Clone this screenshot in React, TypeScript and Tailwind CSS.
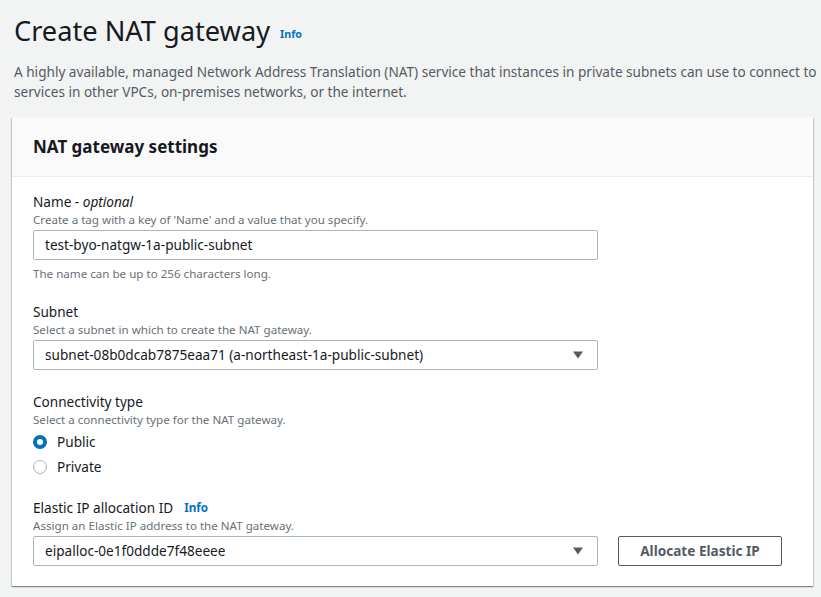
const font = { fontFamily: '"Noto Sans", "Open Sans", Arial, sans-serif' };

const Caret = () => (
  <svg width="12" height="10" viewBox="0 0 12 10" className="shrink-0">
    <path d="M1 1.5h10L6 8.5z" fill="#545b64" />
  </svg>
);

const Field = ({
  label,
  desc,
  info,
  className = "",
  children,
}: {
  label: React.ReactNode;
  desc: string;
  info?: boolean;
  className?: string;
  children: React.ReactNode;
}) => (
  <div className={`flex flex-col ${className}`}>
    <div className="flex items-center gap-[11px] text-[13.6px] leading-[20px] text-[#16191f]">
      <span>{label}</span>
      {info && <span className="text-[11.6px] font-bold text-[#0073bb]">Info</span>}
    </div>
    <div className="text-[11.6px] leading-[16px] text-[#687078]">{desc}</div>
    <div className="mt-[2px]">{children}</div>
  </div>
);

const SelectBox = ({ value }: { value: string }) => (
  <div className="flex h-[30px] w-[565px] items-center justify-between rounded-[2px] border border-[#aab7b8] bg-white pl-[11px] pr-[13px] text-[13.6px] text-[#16191f]">
    <span>{value}</span>
    <Caret />
  </div>
);

export default function App() {
  return (
    <div className="min-h-screen bg-[#f2f3f3] px-[12px] pt-[12px]" style={font}>
      <div className="flex items-center gap-[10px] pl-[2px]">
        <h1 className="text-[27.2px] leading-[38px] text-[#16191f]">Create NAT gateway</h1>
        <span className="mt-[6px] text-[10.7px] font-bold text-[#0073bb]">Info</span>
      </div>
      <p className="mt-[12px] w-[805px] pl-[2px] text-[13.6px] leading-[20px] text-[#545b64]">
        A highly available, managed Network Address Translation (NAT) service that instances in private subnets can use to connect to
        services in other VPCs, on-premises networks, or the internet.
      </p>

      <div className="mt-[15px] w-[801px] bg-white shadow-[0_1px_1px_0_rgba(0,28,36,0.3),1px_1px_1px_0_rgba(0,28,36,0.15),-1px_1px_1px_0_rgba(0,28,36,0.15)]">
        <div className="flex h-[60px] items-center border-b border-[#eaeded] bg-[#fafafa] px-[21px]">
          <h2 className="text-[17px] font-bold text-[#16191f]">NAT gateway settings</h2>
        </div>
        <div className="flex flex-col gap-[20px] px-[21px] pb-[20px] pt-[15px]">
          <div className="flex flex-col">
            <Field
              label={
                <>
                  Name - <i>optional</i>
                </>
              }
              desc="Create a tag with a key of 'Name' and a value that you specify."
            >
              <div className="flex h-[30px] w-[565px] items-center rounded-[2px] border border-[#aab7b8] bg-white px-[11px] text-[13.6px] text-[#16191f]">
                test-byo-natgw-1a-public-subnet
              </div>
            </Field>
            <div className="mt-[6px] text-[11.6px] leading-[16px] text-[#687078]">The name can be up to 256 characters long.</div>
          </div>

          <Field label="Subnet" desc="Select a subnet in which to create the NAT gateway.">
            <SelectBox value="subnet-08b0dcab7875eaa71 (a-northeast-1a-public-subnet)" />
          </Field>

          <div className="mt-[2px] flex flex-col">
            <div className="text-[13.6px] leading-[20px] text-[#16191f]">Connectivity type</div>
            <div className="text-[11.6px] leading-[16px] text-[#687078]">Select a connectivity type for the NAT gateway.</div>
            <div className="mt-[4px] flex flex-col gap-[5px]">
              <div className="flex h-[20px] items-center gap-[10px] text-[13.6px] text-[#16191f]">
                <span className="h-[14px] w-[14px] rounded-full border-[4px] border-[#0073bb] bg-white" />
                Public
              </div>
              <div className="flex h-[20px] items-center gap-[10px] text-[13.6px] text-[#16191f]">
                <span className="h-[14px] w-[14px] rounded-full border border-[#aab7b8] bg-white" />
                Private
              </div>
            </div>
          </div>

          <Field className="mt-[1px]" label="Elastic IP allocation ID" desc="Assign an Elastic IP address to the NAT gateway." info>
            <div className="flex items-center gap-[20px]">
              <SelectBox value="eipalloc-0e1f0ddde7f48eeee" />
              <button className="h-[30px] w-[164px] rounded-[2px] border border-[#545b64] bg-white text-[13.6px] font-bold text-[#545b64]">
                Allocate Elastic IP
              </button>
            </div>
          </Field>
        </div>
      </div>
    </div>
  );
}
